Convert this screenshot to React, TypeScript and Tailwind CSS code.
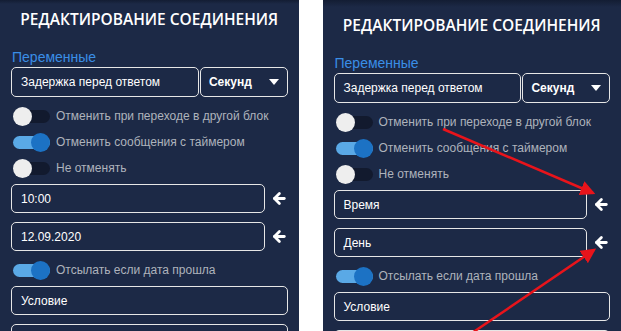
import React from 'react'
import { ArrowLeft } from 'lucide-react'

const FONT = { fontFamily: '"Liberation Sans", Arial, sans-serif' }
const TITLE_FONT = { fontFamily: '"Open Sans", "Noto Sans", sans-serif' }

// ─── Small pieces ─────────────────────────────────────────────────────────────

function Toggle({ on, label }: { on: boolean; label: string }) {
  return (
    <div className="h-[26px] flex items-center gap-[6px] pl-[2px]">
      <div className="relative w-[37px] h-[19px] shrink-0 flex items-center">
        <div className={`w-full h-[13px] rounded-full ${on ? 'bg-[#5aa9e6]' : 'bg-[#121a2e]'}`} />
        <div
          className={`absolute top-0 w-[19px] h-[19px] rounded-full ${on ? 'right-0 bg-[#1c72c4]' : 'left-0 bg-[#eeeeee]'}`}
        />
      </div>
      <span className="text-[12px] text-[#aeb3bc] leading-none whitespace-nowrap">{label}</span>
    </div>
  )
}

function Field({ value, arrow, className = '' }: { value: string; arrow?: boolean; className?: string }) {
  return (
    <div className={`flex items-center ${className}`}>
      <div className={`h-[29px] border border-[#e6e6e6] rounded-[5px] flex items-center pl-[9px] text-[12px] text-white ${arrow ? 'w-[257px]' : 'w-[278px]'}`}>
        {value}
      </div>
      {arrow && (
        <ArrowLeft size={17} strokeWidth={4} className="text-white ml-[6px]" />
      )}
    </div>
  )
}

// ─── Panel ────────────────────────────────────────────────────────────────────

function Panel({ top, time, date }: { top: number; time: string; date: string }) {
  return (
    <div className="w-[299px] h-full bg-[#1c2946] flex flex-col overflow-hidden relative">
      <div className={`shrink-0 bg-gradient-to-b from-[#131d33] to-[#1c2946] ${top > 8 ? 'h-[7px]' : 'h-[4px]'}`} />
      <div style={{ height: top - (top > 8 ? 7 : 4) }} className="shrink-0" />

      <div
        style={TITLE_FONT}
        className="h-[24px] flex items-center justify-center text-[15.5px] font-semibold text-white whitespace-nowrap"
      >
        РЕДАКТИРОВАНИЕ СОЕДИНЕНИЯ
      </div>

      <div className="px-[11px] flex flex-col">
        <div className="mt-[17px] h-[18px] flex items-center text-[14px] text-[#3a8ee6] pl-[1px]">
          Переменные
        </div>

        <div className="mt-[1px] flex h-[30px]">
          <div className="w-[189px] border border-[#e6e6e6] rounded-[5px] flex items-center pl-[9px] text-[12px] text-white">
            Задержка перед ответом
          </div>
          <div className="ml-[1px] w-[88px] border border-[#e6e6e6] rounded-[5px] flex items-center justify-between pl-[8px] pr-[8px] text-[12px] font-bold text-white">
            <span>Секунд</span>
            <svg width="10" height="6" viewBox="0 0 10 6"><path d="M0 0h10L5 6z" fill="#fff" /></svg>
          </div>
        </div>

        <div className="mt-[6px] flex flex-col">
          <Toggle on={false} label="Отменить при переходе в другой блок" />
          <Toggle on={true} label="Отменить сообщения с таймером" />
          <Toggle on={false} label="Не отменять" />
        </div>

        <Field value={time} arrow className="mt-[3px]" />
        <Field value={date} arrow className="mt-[9px]" />

        <div className="mt-[6px]">
          <Toggle on={true} label="Отсылать если дата прошла" />
        </div>

        <Field value="Условие" className="mt-[3px]" />
        <Field value="" className="mt-[9px]" />
      </div>
    </div>
  )
}

// ─── Page ─────────────────────────────────────────────────────────────────────

export default function App() {
  return (
    <div style={FONT} className="relative w-[621px] h-[331px] bg-white flex overflow-hidden">
      <Panel top={8} time="10:00" date="12.09.2020" />
      <div className="w-[24px] shrink-0" />
      <Panel top={14} time="Время" date="День" />

      {/* red annotation arrows */}
      <svg className="absolute inset-0 pointer-events-none" width="621" height="331" viewBox="0 0 621 331">
        <defs>
          <marker id="head" markerWidth="6" markerHeight="6" refX="5" refY="3" orient="auto" markerUnits="strokeWidth">
            <path d="M0 0L6 3L0 6z" fill="#e8141b" />
          </marker>
        </defs>
        <line x1="443" y1="129" x2="593" y2="193" stroke="#e8141b" strokeWidth="2.5" markerEnd="url(#head)" />
        <line x1="472" y1="333" x2="594" y2="250" stroke="#e8141b" strokeWidth="2.5" markerEnd="url(#head)" />
      </svg>
    </div>
  )
}
